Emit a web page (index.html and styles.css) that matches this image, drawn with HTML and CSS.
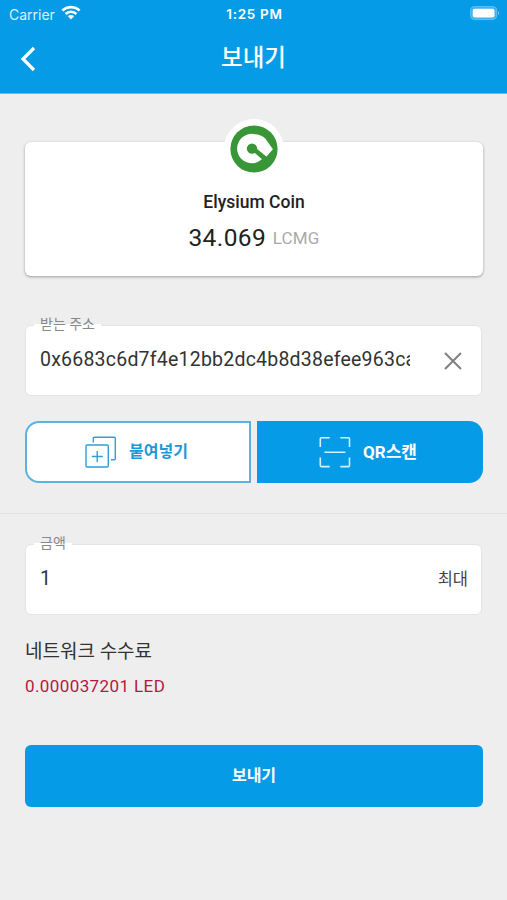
FILE: index.html
```html
<!DOCTYPE html>
<html lang="ko">
<head>
    <meta charset="UTF-8">
    <meta name="viewport" content="width=device-width, initial-scale=1.0">
    <title>보내기</title>
    <link rel="stylesheet" href="styles.css">
</head>
<body>
    <header class="header">
        <div class="status">
            <div class="carrier">
                <span>Carrier</span>
                <svg width="20" height="15" viewBox="0 0 20 15">
                    <g fill="none" stroke="#fff" stroke-width="2.7">
                        <path d="M1.4 5.6a12.2 12.2 0 0 1 17.2 0"/>
                        <path d="M4.6 9a7.6 7.6 0 0 1 10.8 0"/>
                    </g>
                    <path d="M10 14.4l-3.2-3.2a4.6 4.6 0 0 1 6.4 0z" fill="#fff"/>
                </svg>
            </div>
            <span class="time">1:25 PM</span>
            <svg class="battery" width="31" height="15" viewBox="0 0 31 15">
                <rect x="1.6" y=".6" width="26" height="13" rx="4" fill="#3fb2ef" stroke="#62c1f2"/>
                <rect x="3.7" y="2.7" width="21.8" height="8.8" rx="2" fill="#fff"/>
                <path d="M29 4.8q2 2.4 0 4.8z" fill="#80cdf4"/>
            </svg>
        </div>
        <div class="title-bar">
            <svg class="back" width="18" height="26" viewBox="0 0 18 26">
                <path d="M16 2L5 13l11 11" fill="none" stroke="#fff" stroke-width="3.2"/>
            </svg>
            <h1>보내기</h1>
        </div>
    </header>
    <main class="container">
        <section class="card">
            <svg class="coin" width="60" height="60" viewBox="0 0 60 60">
                <circle cx="30" cy="30" r="30" fill="#fff"/>
                <circle cx="30" cy="30" r="23.6" fill="#389637"/>
                <path d="M37.5 40.6A14.7 14.7 0 1 1 31 15.2Q37 15.4 41.3 19.4L48.9 30.3L41.6 38.6z" fill="#fff"/>
                <circle cx="28" cy="29.6" r="5.2" fill="#389637"/>
                <path d="M30 27.6L43.5 38.6L40.5 42.6L28 31.6z" fill="#389637"/>
            </svg>
            <h2>Elysium Coin</h2>
            <p class="balance">34.069 <span>LCMG</span></p>
        </section>

        <div class="field address">
            <label for="address">받는 주소</label>
            <input type="text" id="address" value="0x6683c6d7f4e12bb2dc4b8d38efee963ca41b7e">
            <svg class="clear" width="18" height="18" viewBox="0 0 18 18">
                <path d="M1 1l16 16M17 1L1 17" stroke="#808080" stroke-width="2" fill="none"/>
            </svg>
        </div>

        <div class="buttons">
            <button class="paste">
                <svg width="32" height="32" viewBox="0 0 32 32" fill="none" stroke="#2f9fd8" stroke-width="1.4">
                    <rect x="1" y="9" width="22.3" height="22" rx="1"/>
                    <path d="M12.2 15v11.2M6.8 20.5h11"/>
                    <path d="M8.3 6.5V2.2q0-1 1-1h20q1 0 1 1v20.5q0 1-1 1H26"/>
                </svg>
                <span>붙여넣기</span>
            </button>
            <button class="scan">
                <svg width="32" height="32" viewBox="0 0 32 32" fill="none" stroke="#d2f2ff" stroke-width="1.6">
                    <path d="M1.3 11V2.8q0-1 1-1h8.4M21.3 1.8h8.2q1 0 1 1V11M30.5 21.6v8q0 1-1 1h-8.2M10.7 30.6H2.3q-1 0-1-1v-8M5.4 16.2h21"/>
                </svg>
                <span>QR스캔</span>
            </button>
        </div>

        <hr>

        <div class="field amount">
            <label for="amount">금액</label>
            <input type="text" id="amount" value="1">
            <span class="max">최대</span>
        </div>

        <h3>네트워크 수수료</h3>
        <p class="fee">0.000037201 LED</p>
        <button class="send"><span>보내기</span></button>
    </main>
</body>
</html>
```
FILE: styles.css
```css
* {
    box-sizing: border-box;
}
body {
    margin: 0;
    min-height: 900px;
    font-family: Roboto, "Noto Sans CJK KR", sans-serif;
    background-color: #eee;
    color: #222;
}
h1, h2, h3, p {
    margin: 0;
}
svg {
    display: block;
    flex: none;
}
.header {
    height: 94px;
    background-color: #059be6;
    border-bottom: 1px solid #62bdec;
    color: white;
}
.status {
    display: grid;
    grid-template-columns: 1fr auto 1fr;
    align-items: center;
    height: 28px;
    padding: 0 7px 0 9px;
    font-family: Inter, sans-serif;
    font-size: 14px;
}
.carrier {
    display: flex;
    align-items: center;
    gap: 6px;
    color: #d9f2ff;
}
.carrier svg {
    margin-top: -3px;
}
.time {
    font-size: 13.5px;
    font-weight: 600;
    letter-spacing: 0.7px;
}
.battery {
    justify-self: end;
    margin-top: -1px;
}
.title-bar {
    display: grid;
    grid-template-columns: 1fr auto 1fr;
    align-items: center;
    height: 60px;
    padding: 0 18px;
}
.back {
    margin-top: 2px;
}
h1 {
    font-size: 23.5px;
    font-weight: 500;
    line-height: 60px;
}
.container {
    padding: 48px 25px 0;
}
.card {
    display: flex;
    flex-direction: column;
    align-items: center;
    height: 134px;
    margin-right: -1px;
    background: white;
    border-radius: 6px;
    box-shadow: 0 1px 3px rgba(0, 0, 0, 0.35);
}
.coin {
    margin-top: -23px;
}
h2 {
    margin-top: 12px;
    font-size: 17.5px;
    font-weight: 500;
    line-height: 22px;
}
.balance {
    margin-top: 8px;
    font-size: 24.5px;
    line-height: 34px;
    letter-spacing: 0.4px;
}
.balance span {
    position: relative;
    top: -2px;
    font-size: 17px;
    letter-spacing: 0.2px;
    color: #aaa;
}
.field {
    position: relative;
    display: flex;
    align-items: center;
    justify-content: space-between;
    height: 71px;
    padding: 0 14px;
    background: white;
    border: 1px solid #e4e4e4;
    border-radius: 6px;
}
.field label {
    position: absolute;
    top: -12px;
    left: 8px;
    padding: 0 6px;
    font-size: 14px;
    line-height: 20px;
    color: #888;
    background: linear-gradient(#eee 10px, white 10px);
}
.field input {
    width: 370px;
    padding: 0 0 2px;
    border: none;
    outline: none;
    background: none;
    font-family: inherit;
    font-size: 19.5px;
    letter-spacing: 0.22px;
    color: #333;
}
.address {
    margin-top: 49px;
}
.clear {
    margin-right: 5px;
}
.max {
    flex: none;
    margin-right: -1px;
    padding-bottom: 4px;
    font-size: 16.5px;
    color: #444;
}
.buttons {
    display: flex;
    gap: 6px;
    margin: 25px -1px 0 0;
}
button {
    display: flex;
    justify-content: center;
    align-items: center;
    height: 62px;
    padding: 0;
    border: none;
    font-family: inherit;
    font-size: 16px;
    font-weight: 700;
    color: white;
    background-color: #059be6;
    cursor: pointer;
}
button span {
    padding-bottom: 4px;
}
.buttons button {
    flex: 1 1 0;
    gap: 12px;
    padding-right: 3px;
}
.buttons .paste {
    color: #1d97d7;
    background: white;
    border: 2px solid #59b4e0;
    border-radius: 14px 0 0 14px;
}
.buttons .scan {
    flex: none;
    width: 226px;
    padding-right: 4px;
    border-radius: 0 14px 14px 0;
}
.scan span {
    font-size: 17px;
}
hr {
    height: 1px;
    margin: 30px -25px;
    border: none;
    background: #e3e3e3;
}
h3 {
    margin-top: 23px;
    font-size: 19px;
    font-weight: 400;
    line-height: 28px;
    color: #333;
}
.fee {
    margin-top: 7px;
    font-size: 17px;
    line-height: 26px;
    letter-spacing: 0.4px;
    color: #b3193f;
}
.send {
    width: 458px;
    margin-top: 46px;
    border-radius: 6px;
}
```
